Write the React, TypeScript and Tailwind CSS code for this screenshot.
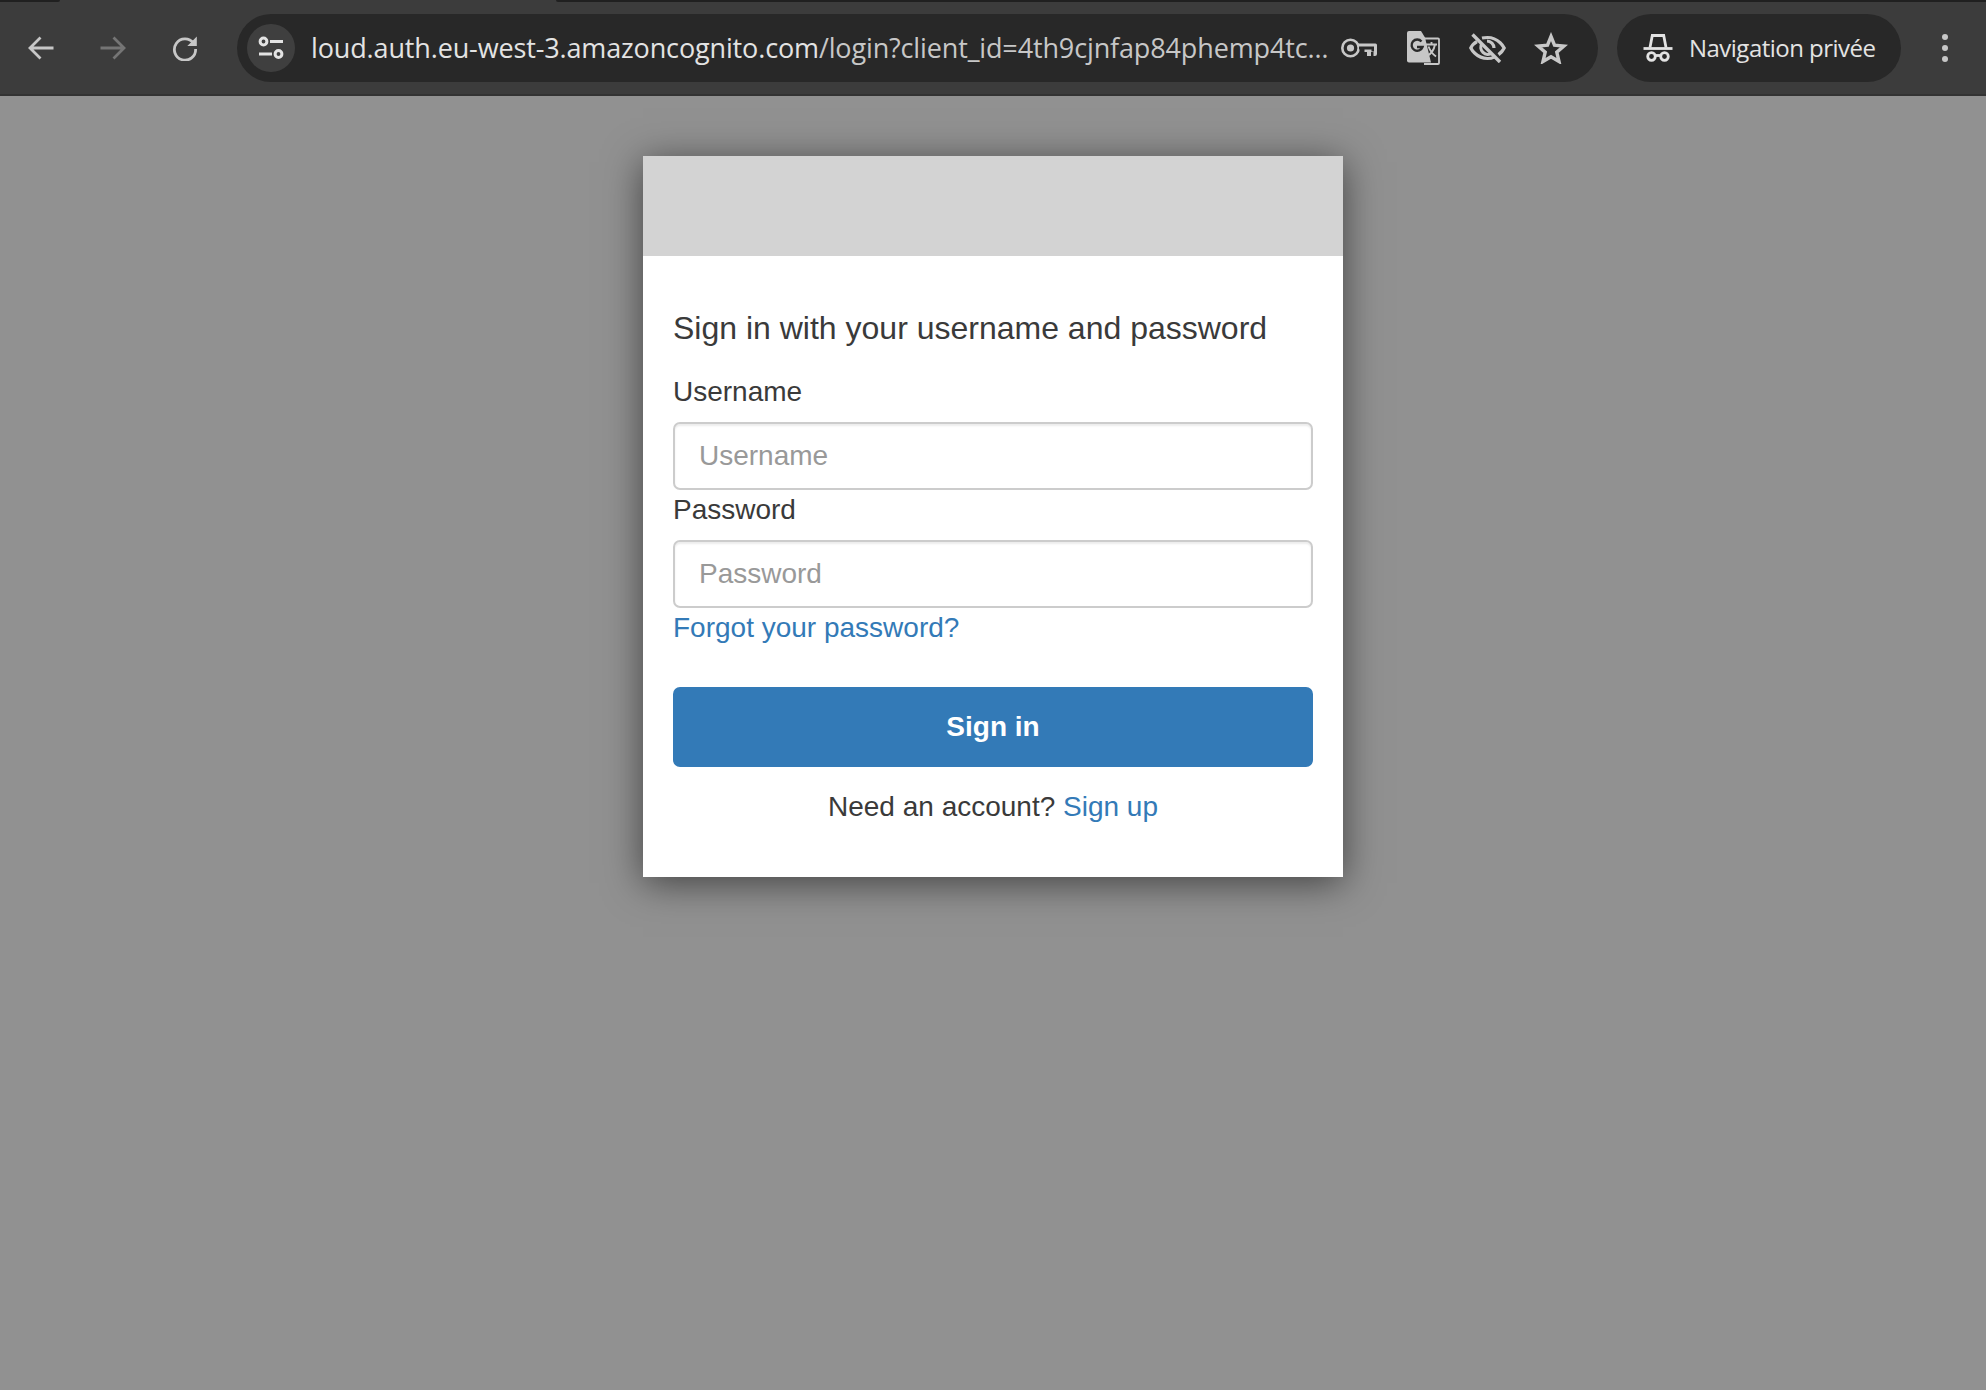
const FONT = "font-['Liberation_Sans',Arial,sans-serif]";

function Back() {
  return (
    <svg width="26" height="24" viewBox="0 0 26 24" fill="none" stroke="#c7c7c7" strokeWidth="2.8">
      <path d="M25.500 12H2.500M12.500 1.500L2 12l10.500 10.500" />
    </svg>
  );
}
function Forward() {
  return (
    <svg width="26" height="24" viewBox="0 0 26 24" fill="none" stroke="#757575" strokeWidth="2.8">
      <path d="M0.500 12H23.500M13.500 1.500L24 12 13.500 22.500" />
    </svg>
  );
}
function Reload() {
  return (
    <svg width="26" height="26" viewBox="0 0 26 26" fill="none">
      <path d="M21.500 8.200A10.600 10.600 0 1 0 23.600 14" stroke="#c7c7c7" strokeWidth="2.800" />
      <path d="M24.800 1.500v9.500h-9.500z" fill="#c7c7c7" />
    </svg>
  );
}
function Tune() {
  return (
    <svg width="26" height="24" viewBox="0 0 26 24" fill="none" stroke="#e3e3e3" strokeWidth="3">
      <circle cx="5.500" cy="5.500" r="3.400" />
      <path d="M12 5.500h13M1 18h13" />
      <circle cx="20.500" cy="18" r="3.400" />
    </svg>
  );
}
function Key() {
  return (
    <svg width="36" height="20" viewBox="0 0 36 20" fill="none">
      <circle cx="9.500" cy="10" r="8.200" stroke="#c7c7c7" strokeWidth="2.600" />
      <circle cx="9.500" cy="10" r="3.600" fill="#c7c7c7" />
      <path d="M17 5.500h17.500a1.500 1.500 0 0 1 1.500 1.500v9a2 2 0 0 1-2 2h-1.500v-4H30v4h-4v-4h-2.500v-3H17z" fill="#c7c7c7" />
      <path d="M18 8.500h15v5h-2.500v-2H18z" fill="#282828" />
    </svg>
  );
}
function Translate() {
  return (
    <svg width="33" height="34" viewBox="0 0 33 34" fill="none">
      <path d="M2 0h12l4 6.500 6 25H2a2 2 0 0 1-2-2V2a2 2 0 0 1 2-2z" fill="#c7c7c7" />
      <path d="M16 7.500h15a1 1 0 0 1 1 1V32a1 1 0 0 1-1 1H17" stroke="#c7c7c7" strokeWidth="1.800" />
      <path d="M14.500 10.500A5.600 5.600 0 1 0 15.500 16H10" stroke="#2a2a2a" strokeWidth="2.400" />
      <path d="M19 13.500h11M24.500 11v2.500M28 13.500c-1 5.500-4 9.500-8.500 12M21.500 15.500c1.500 4 4 7.500 7.500 10" stroke="#c7c7c7" strokeWidth="1.900" />
    </svg>
  );
}
function EyeOff() {
  return (
    <svg width="37" height="30" viewBox="0 0 37 30" fill="none" stroke="#c7c7c7">
      <path d="M8 8.500C3.500 11 1.800 15 1.800 15S7 25.500 18.500 25.500c2.500 0 4.800-.5 6.800-1.400M13 5c1.700-.4 3.500-.5 5.500-.5C30 4.500 35.200 15 35.200 15s-1.700 3.600-5.700 6.600" strokeWidth="3.200" />
      <path d="M13 10.500a7 7 0 0 0 10 9.500M18 8a7 7 0 0 1 7 7" strokeWidth="3.200" />
      <path d="M3.500 1.500L31 29" strokeWidth="3.400" />
    </svg>
  );
}
function Star() {
  return (
    <svg width="34" height="32" viewBox="0 0 34 32" fill="none">
      <path d="M17 4.500l3.500 8.700 9.500.8-7.200 6.200 2.200 9.300L17 24.800l-8 4.700 2.200-9.300L4 14l9.500-.8z" stroke="#c7c7c7" strokeWidth="3.400" />
    </svg>
  );
}
function Incognito() {
  return (
    <svg width="30" height="28" viewBox="0 0 30 28" fill="none" stroke="#e3e3e3" strokeWidth="2.800">
      <path d="M7 13.500L9.300 1.500h11.400L23 13.500" />
      <path d="M0.500 14.500h29" />
      <circle cx="8.500" cy="22.500" r="3.800" />
      <circle cx="21.500" cy="22.500" r="3.800" />
      <path d="M12 21.500h6" />
    </svg>
  );
}

function Cell({ children }: { children: React.ReactNode }) {
  return <div className="flex h-full w-[64px] shrink-0 items-center justify-center">{children}</div>;
}
function NavCell({ children }: { children: React.ReactNode }) {
  return <div className="flex h-[48px] w-[72px] shrink-0 items-center justify-center">{children}</div>;
}

function Toolbar() {
  return (
    <header className="flex h-[96px] flex-col bg-[#3c3c3c]">
      <div className="flex h-[2px] bg-[#3c3c3c]">
        <div className="h-full w-[60px] rounded-br-[6px] bg-[#202020]" />
        <div className="w-[496px]" />
        <div className="h-full flex-1 rounded-bl-[6px] bg-[#202020]" />
      </div>
      <div className="flex flex-1 items-center pl-[5px] pr-[5px]">
        <NavCell><Back /></NavCell>
        <NavCell><Forward /></NavCell>
        <NavCell><Reload /></NavCell>
        <div className="ml-[16px] flex h-[68px] w-[1361px] shrink-0 items-center rounded-full bg-[#282828] pl-[10px] pr-[15px]">
          <div className="flex h-[48px] w-[48px] shrink-0 items-center justify-center rounded-full bg-[#3f3f3f]">
            <Tune />
          </div>
          <div className="ml-[16px] min-w-0 flex-1 whitespace-nowrap font-['Open_Sans',sans-serif] text-[27px] leading-[36px] tracking-[-0.14px] text-[#e3e3e3]">
            loud.auth.eu-west-3.amazoncognito.com<span className="text-[#c7c7c7]">/login?client_id=4th9cjnfap84phemp4tc…</span>
          </div>
          <Cell><Key /></Cell>
          <Cell><Translate /></Cell>
          <Cell><EyeOff /></Cell>
          <Cell><Star /></Cell>
        </div>
        <div className="ml-[19px] flex h-[68px] w-[284px] shrink-0 items-center rounded-full bg-[#282828] pl-[26px]">
          <Incognito />
          <span className="ml-[16px] whitespace-nowrap font-['Open_Sans',sans-serif] text-[24px] leading-[32px] tracking-[-0.52px] text-[#e3e3e3]">Navigation privée</span>
        </div>
        <div className="ml-[20px] flex h-[48px] w-[48px] shrink-0 flex-col items-center justify-center gap-[5px]">
          <span className="h-[6px] w-[6px] rounded-full bg-[#c7c7c7]" />
          <span className="h-[6px] w-[6px] rounded-full bg-[#c7c7c7]" />
          <span className="h-[6px] w-[6px] rounded-full bg-[#c7c7c7]" />
        </div>
      </div>
      <div className="h-[2px] bg-[#333333]" />
    </header>
  );
}

function Field({ label }: { label: string }) {
  return (
    <>
      <label className="mb-[10px] block h-[40px] text-[28px] leading-[40px] text-[#3a3a3a]">{label}</label>
      <input
        placeholder={label}
        className="block h-[68px] w-full rounded-[7px] border-[2.5px] border-[#cccccc] bg-white pl-[24px] text-[28px] text-[#555555] shadow-[inset_0_2px_2px_rgba(0,0,0,0.08)] outline-none placeholder:text-[#999999]"
      />
    </>
  );
}

export default function App() {
  return (
    <div className={`flex min-h-[1390px] flex-col ${FONT}`}>
      <Toolbar />
      <main className="flex-1 bg-[#919191] pt-[60px]">
        <div className="mx-auto w-[700px] bg-white shadow-[0_6px_36px_rgba(0,0,0,0.55)]">
          <div className="h-[100px] bg-[#d3d3d3]" />
          <div className="px-[30px] pb-[50px] pt-[52px]">
            <h1 className="mb-[24px] h-[40px] text-[32px] font-normal leading-[40px] text-[#3a3a3a]">
              Sign in with your username and password
            </h1>
            <Field label="Username" />
            <Field label="Password" />
            <a className="block h-[40px] text-[28px] leading-[40px] text-[#337ab7]">Forgot your password?</a>
            <button className="mt-[39px] block h-[80px] w-full rounded-[7px] bg-[#337ab7] text-[28px] font-bold text-white">
              Sign in
            </button>
            <p className="mt-[20px] h-[40px] text-center text-[28px] leading-[40px] text-[#3a3a3a]">
              Need an account? <a className="text-[#337ab7]">Sign up</a>
            </p>
          </div>
        </div>
      </main>
    </div>
  );
}
